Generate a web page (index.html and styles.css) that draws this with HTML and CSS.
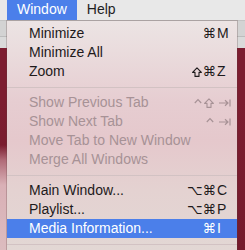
FILE: index.html
```html
<!DOCTYPE html>
<html>
<head>
<meta charset="utf-8">
<link rel="stylesheet" href="styles.css">
</head>
<body>
<div class="menubar">
  <span class="mb-item active">Window</span>
  <span class="mb-item">Help</span>
</div>
<div class="menu">
  <div class="row"><span class="label">Minimize</span><span class="mods">⌘</span><span class="key">M</span></div>
  <div class="row"><span class="label">Minimize All</span><span class="mods"></span><span class="key"></span></div>
  <div class="row"><span class="label">Zoom</span><span class="mods"><svg class="shift" viewBox="0 0 10 10" width="10" height="10"><path d="M5 0.8 L9.4 5.4 H7 V9.4 H3 V5.4 H0.6 Z" fill="none" stroke="currentColor" stroke-width="1.1" stroke-linejoin="round"/></svg>⌘</span><span class="key">Z</span></div>
  <div class="sep"></div>
  <div class="row disabled"><span class="label">Show Previous Tab</span><span class="mods"><svg class="ctrl" viewBox="0 0 8 10" width="8" height="10"><path d="M0.8 5 L4 1.6 L7.2 5" fill="none" stroke="currentColor" stroke-width="1.2"/></svg><svg class="shift" viewBox="0 0 10 10" width="10" height="10"><path d="M5 0.8 L9.4 5.4 H7 V9.4 H3 V5.4 H0.6 Z" fill="none" stroke="currentColor" stroke-width="1.1" stroke-linejoin="round"/></svg></span><span class="key sym"><svg viewBox="0 0 12 8" width="12" height="8"><path d="M0 4 H9 M6 1.2 L9 4 L6 6.8 M11 0.5 V7.5" fill="none" stroke="currentColor" stroke-width="1.2"/></svg></span></div>
  <div class="row disabled"><span class="label">Show Next Tab</span><span class="mods"><svg class="ctrl" viewBox="0 0 8 10" width="8" height="10"><path d="M0.8 5 L4 1.6 L7.2 5" fill="none" stroke="currentColor" stroke-width="1.2"/></svg></span><span class="key sym"><svg viewBox="0 0 12 8" width="12" height="8"><path d="M0 4 H9 M6 1.2 L9 4 L6 6.8 M11 0.5 V7.5" fill="none" stroke="currentColor" stroke-width="1.2"/></svg></span></div>
  <div class="row disabled"><span class="label">Move Tab to New Window</span><span class="mods"></span><span class="key"></span></div>
  <div class="row disabled"><span class="label">Merge All Windows</span><span class="mods"></span><span class="key"></span></div>
  <div class="sep"></div>
  <div class="row"><span class="label">Main Window...</span><span class="mods">⌥⌘</span><span class="key">C</span></div>
  <div class="row"><span class="label">Playlist...</span><span class="mods">⌥⌘</span><span class="key">P</span></div>
  <div class="row selected"><span class="label">Media Information...</span><span class="mods">⌘</span><span class="key">I</span></div>
  <div class="sep"></div>
</div>
</body>
</html>
```
FILE: styles.css
```css
html, body {
  margin: 0;
  padding: 0;
  width: 245px;
  height: 250px;
  overflow: hidden;
}
body {
  font-family: "Liberation Sans", Arial, sans-serif;
  font-size: 14px;
  color: #1e1a1b;
  background:
    linear-gradient(to bottom, transparent 0 145px, #b06a77 160px, #d9b0b6 185px, #dcbcbf 250px) 0 0 / 7px 250px no-repeat,
    linear-gradient(to bottom, #e8e8e8 0 21px, #d3d3d3 21px 36px, #bcbcbc 36px 37px, #dadada 37px 48px, #7c1d30 48px 100px, #741a2c 250px);
}
.menubar {
  height: 20px;
  background: #e8e8e8;
  border-bottom: 1px solid #c4c4c4;
  display: flex;
  padding-left: 7px;
}
.mb-item {
  line-height: 19px;
  padding: 0 10px;
  height: 20px;
  color: #1e1e1e;
}
.mb-item.active {
  background: #4b7fea;
  color: #fff;
}
.menu {
  margin-left: 7px;
  width: 230px;
  padding-top: 3px;
  background: linear-gradient(to bottom, #ece4e4 0, #eadcdd 30px, #e6cdd1 80px, #e5c8cc 120px, #e4d2d1 170px, #e2d7d4 229px);
  box-shadow: 0 0 0 1px rgba(90, 60, 60, 0.25);
}
.row {
  display: flex;
  height: 19px;
  line-height: 19px;
  padding-left: 22px;
  padding-right: 6px;
  white-space: nowrap;
}
.label {
  flex: 1;
}
.mods {
  font-family: "DejaVu Sans", sans-serif;
  font-size: 13.5px;
  text-align: right;
}
.shift {
  vertical-align: -1px;
  margin: 0 1px;
}
.ctrl {
  vertical-align: -1px;
  margin-right: 1px;
}
.key {
  width: 14px;
  margin-left: 1px;
}
.key.sym {
  padding-left: 3px;
  width: 12px;
}
.key.sym svg {
  vertical-align: 0;
}
.disabled {
  color: #a79296;
}
.selected {
  background: #4b7fea;
  color: #fff;
}
.sep {
  height: 12px;
  display: flex;
  align-items: center;
}
.sep::before {
  content: "";
  flex: 1;
  height: 1px;
  background: #d2c2c3;
}
```
